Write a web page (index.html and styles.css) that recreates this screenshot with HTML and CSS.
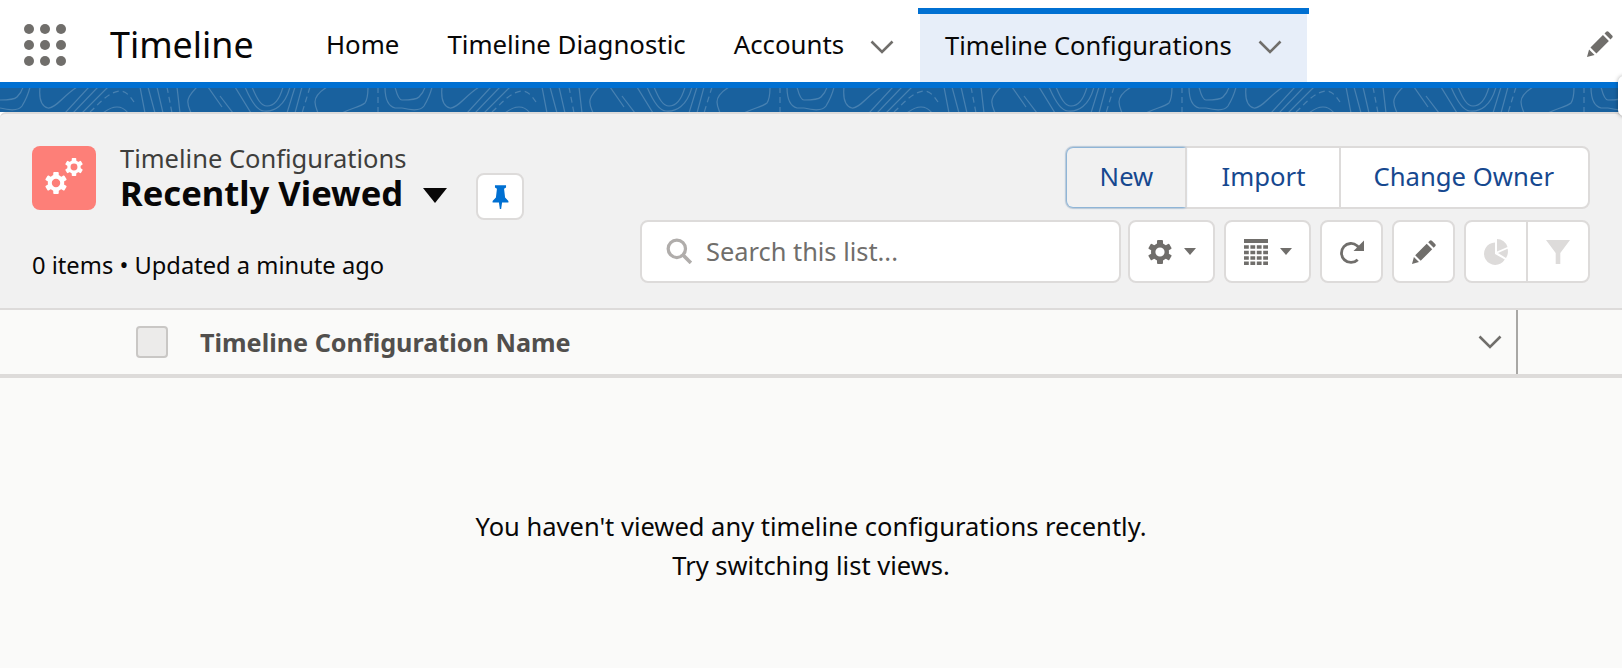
FILE: index.html
```html
<!DOCTYPE html>
<html lang="en">
<head>
  <meta charset="UTF-8" />
  <title>Timeline Configurations</title>
  <link rel="stylesheet" href="styles.css">
</head>
<body>
  <svg class="defs" width="0" height="0">
    <defs>
      <symbol id="gear" viewBox="0 0 24 24">
        <circle cx="12" cy="12" r="6.8" fill="none" stroke="currentColor" stroke-width="4.4" />
        <g fill="currentColor">
          <rect x="9" y="0" width="6" height="5" rx="1" />
          <rect x="9" y="19" width="6" height="5" rx="1" />
          <rect x="9" y="0" width="6" height="5" rx="1" transform="rotate(60 12 12)" />
          <rect x="9" y="0" width="6" height="5" rx="1" transform="rotate(120 12 12)" />
          <rect x="9" y="0" width="6" height="5" rx="1" transform="rotate(240 12 12)" />
          <rect x="9" y="0" width="6" height="5" rx="1" transform="rotate(300 12 12)" />
        </g>
      </symbol>
      <symbol id="pencil" viewBox="0 0 24 24">
        <path fill="currentColor" d="M0 24l1.9-7 5.1 5.1zM3.2 15.3L14.7 3.8l5.5 5.5L8.7 20.8zM16.2 2.3l1.5-1.5a1.6 1.6 0 0 1 2.2 0l3.3 3.3a1.6 1.6 0 0 1 0 2.2l-1.5 1.5z" />
      </symbol>
      <symbol id="chevron" viewBox="0 0 24 14">
        <path fill="none" stroke="currentColor" stroke-width="2.6" d="M1.5 1.5L12 12 22.5 1.5" />
      </symbol>
      <pattern id="topo" width="402" height="24" patternUnits="userSpaceOnUse">
        <g fill="none" stroke="#fff" stroke-opacity=".2" stroke-width="1.2">
          <path d="M0 20c8 2 18 4 22-2 3-5 6-10 8-19M0 12c6 0 14 0 17-3 3-3 5-6 6-10" />
          <path d="M40 -1c-1 10 0 19 8 21 7 1 15-12 29-21" />
          <path d="M65 25L89 -1M73 25L98 -1M82 25L108 -1" />
          <path d="M90 24c8-7 18-20 30-21 6 0 10 5 14 11" stroke-dasharray="6 4" />
          <path d="M103 25c5-4 10-6 14-6 4 0 8 2 11 6" />
          <path d="M140 -1l5 26M148 -1l7 26M157 -1l6 26M177 -1l3 26" />
          <path d="M167 -1l5 26" stroke-dasharray="6 4" />
          <path d="M197 -1c-6 6-10 12-9 16 0 4 2 7 3 10" />
          <path d="M208 -1l14 20M220 8l13 17M235 -1l16 26" />
          <path d="M252 -1c5 12 9 19 15 19 8 0 13-8 16-19M245 -1c6 14 12 24 19 24 10 1 21-5 26-24" />
          <path d="M295 -1l-8 26M302 -1l-7 26" />
          <path d="M310 -1l-8 26" stroke-dasharray="6 4" />
          <path d="M327 -1c-8 5-12 10-12 15 0 4 2 8 3 11" />
          <path d="M342 25c10-5 18-6 23-10 2-3 3-9 3-16" />
          <path d="M378 -1v26" stroke-dasharray="6 4" />
          <path d="M385 -1c0 10 2 19 10 21l7 0M395 -1c2 8 4 13 7 13" />
        </g>
      </pattern>
    </defs>
  </svg>

  <header class="topnav">
    <button class="waffle" aria-label="App launcher">
      <i></i><i></i><i></i><i></i><i></i><i></i><i></i><i></i><i></i>
    </button>
    <div class="app-name">Timeline</div>
    <nav class="tabs">
      <a class="tab">Home</a>
      <a class="tab">Timeline Diagnostic</a>
      <a class="tab has-menu">Accounts
        <svg class="chev"><use href="#chevron" /></svg>
      </a>
      <a class="tab has-menu active">Timeline Configurations
        <svg class="chev"><use href="#chevron" /></svg>
      </a>
    </nav>
    <svg class="edit-nav"><use href="#pencil" /></svg>
  </header>

  <div class="banner">
    <svg width="100%" height="24"><rect width="100%" height="24" fill="url(#topo)" /></svg>
  </div>
  <div class="side-peek"></div>

  <main class="panel">
    <section class="list-head">
      <div class="head-left">
        <div class="title-row">
          <div class="obj-icon">
            <svg class="gear-big"><use href="#gear" /></svg>
            <svg class="gear-small"><use href="#gear" /></svg>
          </div>
          <div class="titles">
            <div class="obj-label">Timeline Configurations</div>
            <h1 class="view-name">Recently Viewed <span class="caret"></span></h1>
          </div>
          <button class="btn pin-btn" aria-label="Pin list view">
            <svg viewBox="0 0 24 30" width="19" height="26">
              <path fill="#0070d2" d="M5 0h14v3l-2.5 1.5 1.3 11 4.2 4.7V22H14l-1.2 8h-1.6L10 22H2v-1.8l4.2-4.7 1.3-11L5 3z" />
            </svg>
          </button>
        </div>
        <div class="meta">0 items • Updated a minute ago</div>
      </div>

      <div class="head-right">
        <div class="actions">
          <button class="action focused">New</button>
          <button class="action">Import</button>
          <button class="action owner">Change Owner</button>
        </div>
        <div class="toolbar">
          <div class="search">
            <svg viewBox="0 0 24 24" width="26" height="26">
              <circle cx="10" cy="10" r="8" fill="none" stroke="#b0adab" stroke-width="3" />
              <path d="M15.5 15.5L23 23" stroke="#b0adab" stroke-width="3.4" />
            </svg>
            <span>Search this list...</span>
          </div>
          <button class="btn tool wide">
            <svg class="ico"><use href="#gear" /></svg><span class="mini-caret"></span>
          </button>
          <button class="btn tool wide">
            <svg class="ico" viewBox="0 0 24 26">
              <path fill="currentColor" d="M0 0h24v4H0z" />
              <path stroke="currentColor" stroke-width="3.4" stroke-dasharray="4.8 1.6" d="M0 8h24M0 13.5h24M0 19h24M0 24.3h24" />
            </svg><span class="mini-caret"></span>
          </button>
          <button class="btn tool">
            <svg class="ico" viewBox="0 0 24 24">
              <path fill="none" stroke="currentColor" stroke-width="2.8" d="M17.7 19.7A9.5 9.5 0 1 1 17.1 5.7l3 3" />
              <path fill="currentColor" d="M24 .5V11H13.5z" />
            </svg>
          </button>
          <button class="btn tool">
            <svg class="ico"><use href="#pencil" /></svg>
          </button>
          <div class="btn tool-pair">
            <span class="cell">
              <svg class="ico" viewBox="0 0 24 26">
                <path fill="#dddbda" d="M11 3.5V15l9.8 5.5A11.2 11.2 0 1 1 11 3.5zM13 0a11 11 0 0 1 10.5 8L13 12.5z" />
                <path fill="#dddbda" d="M14 14l9.6-4.2A12 12 0 0 1 22 19z" />
              </svg>
            </span>
            <span class="cell">
              <svg class="ico" viewBox="0 0 26 26">
                <path fill="#dddbda" d="M0 0h26L15.5 14v12h-5V14z" />
              </svg>
            </span>
          </div>
        </div>
      </div>
    </section>

    <div class="table-head">
      <span class="check"></span>
      <span class="col-name">Timeline Configuration Name</span>
      <svg class="col-chev"><use href="#chevron" /></svg>
      <span class="col-rule"></span>
    </div>

    <div class="empty">
      <p>You haven't viewed any timeline configurations recently.</p>
      <p>Try switching list views.</p>
    </div>
  </main>
</body>
</html>
```

FILE: styles.css
```css
* {
  box-sizing: border-box;
}
html, body {
  height: 100%;
  overflow: hidden;
}
body {
  margin: 0;
  display: flex;
  flex-direction: column;
  font-family: "Noto Sans", sans-serif;
  color: #080707;
  background: #fff;
  position: relative;
}
button {
  font-family: inherit;
  cursor: pointer;
}
.defs {
  position: absolute;
}

/* top nav */
.topnav {
  display: flex;
  align-items: stretch;
  height: 88px;
  flex: none;
  padding: 6px 0 0 24px;
  border-bottom: 6px solid #0070d2;
  background: #fff;
}
.waffle {
  display: grid;
  grid-template-columns: repeat(3, 10px);
  gap: 6px;
  align-self: center;
  margin-top: 2px;
  padding: 0;
  border: none;
  background: none;
}
.waffle i {
  width: 10px;
  height: 10px;
  border-radius: 50%;
  background: #706e6b;
}
.app-name {
  display: flex;
  align-items: center;
  margin-left: 44px;
  width: 216px;
  font-size: 35.8px;
}
.tabs {
  display: flex;
  align-items: stretch;
  font-size: 25.8px;
}
.tab {
  display: flex;
  align-items: center;
  margin-right: 48px;
  white-space: nowrap;
}
.tab.has-menu {
  margin-right: 26px;
}
.chev {
  width: 24px;
  height: 14px;
  margin-left: 26px;
  margin-top: 5px;
  color: #706e6b;
}
.tab.active {
  position: relative;
  margin: 2px 0 0;
  width: 387px;
  padding: 0 0 7px 25px;
  font-size: 25.5px;
  background: #e7eef9;
  border-top: 6px solid #0070d2;
}
.tab.active::before {
  content: "";
  position: absolute;
  top: -6px;
  left: -2px;
  right: -2px;
  height: 6px;
  background: #0070d2;
}
.edit-nav {
  width: 28px;
  height: 26px;
  align-self: center;
  margin-left: auto;
  margin-right: 8px;
  color: #706e6b;
}

/* banner strip */
.banner {
  flex: none;
  height: 24px;
  background: #19619e;
}
.banner svg {
  display: block;
}
.side-peek {
  position: absolute;
  top: 76px;
  right: -8px;
  width: 12px;
  height: 40px;
  border-radius: 6px 0 0 6px;
  background: #fff;
  box-shadow: 0 0 4px rgba(0, 0, 0, .35);
}

/* list view panel */
.panel {
  flex: 1;
  display: flex;
  flex-direction: column;
  background: #fafaf9;
  border-radius: 6px 6px 0 0;
}
.list-head {
  display: flex;
  justify-content: space-between;
  height: 198px;
  flex: none;
  padding: 32px 32px 0;
  background: #f1f1f1;
  border-top: 2px solid #dddbda;
  border-bottom: 2px solid #dddbda;
  border-radius: 6px 6px 0 0;
}
.title-row {
  display: flex;
  align-items: flex-start;
}
.obj-icon {
  position: relative;
  width: 64px;
  height: 64px;
  border-radius: 8px;
  background: #fd7f78;
  color: #fff;
}
.gear-big {
  position: absolute;
  left: 13px;
  top: 26px;
  width: 22px;
  height: 22px;
}
.gear-small {
  position: absolute;
  left: 33px;
  top: 12px;
  width: 18px;
  height: 18px;
}
.titles {
  margin: -2px 0 0 24px;
}
.obj-label {
  font-size: 25.5px;
  line-height: 28px;
  color: #3e3e3c;
}
.view-name {
  display: flex;
  align-items: center;
  margin: 0;
  font-size: 34.6px;
  line-height: 42px;
  font-weight: 700;
}
.caret {
  width: 0;
  height: 0;
  margin-left: 20px;
  margin-top: 4px;
  border-left: 12px solid transparent;
  border-right: 12px solid transparent;
  border-top: 15px solid #080707;
}
.btn {
  background: #fff;
  border: 2px solid #dddbda;
  border-radius: 8px;
  padding: 0;
}
.pin-btn {
  display: flex;
  align-items: center;
  justify-content: center;
  width: 48px;
  height: 47px;
  margin: 27px 0 0 29px;
}
.meta {
  margin-top: 31px;
  font-size: 23.7px;
  line-height: 28px;
}

.head-right {
  display: flex;
  flex-direction: column;
  align-items: flex-end;
}
.actions {
  display: flex;
  height: 63px;
  background: #fff;
  border: 2px solid #dddbda;
  border-radius: 8px;
}
.action {
  height: 100%;
  padding: 0 34px 3px;
  border: none;
  border-left: 2px solid #dddbda;
  background: none;
  font-size: 25.7px;
  color: #16488f;
}
.action:first-child {
  border-left: none;
}
.action.owner {
  padding-left: 32px;
}
.action.focused {
  width: 118px;
  padding: 0 0 3px;
  background: #f1f1f1;
  box-shadow: 0 0 3px #0070d2;
  border-radius: 6px 0 0 6px;
}
.toolbar {
  display: flex;
  margin-top: 11px;
  gap: 9px;
  height: 63px;
}
.search {
  display: flex;
  align-items: center;
  width: 481px;
  margin-right: -2px;
  padding: 0 0 2px 24px;
  background: #fff;
  border: 2px solid #dddbda;
  border-radius: 8px;
  font-size: 25.4px;
  color: #706e6b;
}
.search span {
  margin-left: 14px;
}
.tool {
  display: flex;
  align-items: center;
  justify-content: center;
  width: 63px;
  color: #706e6b;
}
.tool.wide {
  width: 87px;
  gap: 12px;
}
.ico {
  width: 24px;
  height: 26px;
}
.mini-caret {
  width: 0;
  height: 0;
  border-left: 6px solid transparent;
  border-right: 6px solid transparent;
  border-top: 7px solid #706e6b;
}
.tool-pair {
  display: flex;
  width: 126px;
}
.cell {
  flex: 1;
  display: flex;
  align-items: center;
  justify-content: center;
}
.cell + .cell {
  border-left: 2px solid #dddbda;
}

/* table header */
.table-head {
  display: flex;
  align-items: center;
  flex: none;
  height: 68px;
  padding-left: 136px;
  background: #fafaf9;
  border-bottom: 4px solid #dddbda;
}
.check {
  width: 32px;
  height: 32px;
  background: #ecebea;
  border: 2px solid #c9c7c5;
  border-radius: 4px;
}
.col-name {
  margin-left: 32px;
  font-size: 25.2px;
  font-weight: 700;
  color: #514f4d;
}
.col-chev {
  width: 24px;
  height: 14px;
  margin-left: auto;
  color: #706e6b;
}
.col-rule {
  align-self: stretch;
  width: 2px;
  margin: 0 104px 0 14px;
  background: #a8a7a5;
}

/* empty state */
.empty {
  padding-top: 129px;
  text-align: center;
  font-size: 25.5px;
  line-height: 39px;
}
.empty p {
  margin: 0;
}
```
